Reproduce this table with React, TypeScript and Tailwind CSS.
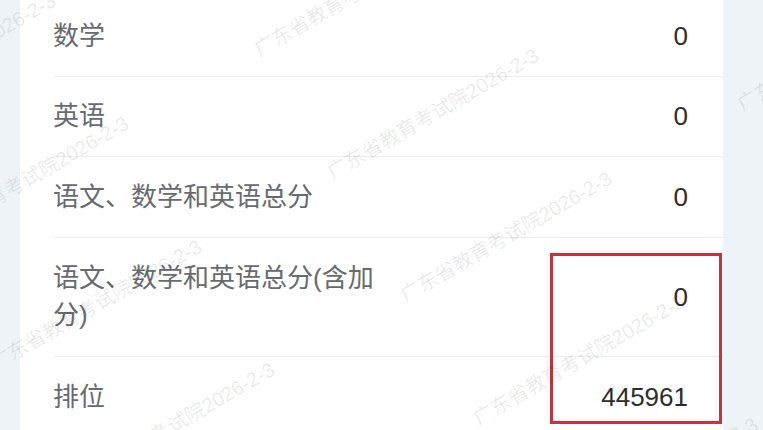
import type { ReactNode } from "react";

interface ScoreRow {
  label: ReactNode;
  value: string;
  height: string;
}

const rows: ScoreRow[] = [
  { label: "数学", value: "0", height: "h-[80px]" },
  { label: "英语", value: "0", height: "h-[80px]" },
  { label: "语文、数学和英语总分", value: "0", height: "h-[81px]" },
  { label: "语文、数学和英语总分(含加分)", value: "0", height: "h-[119px]" },
  { label: "排位", value: "445961", height: "h-[80px]" },
];

// watermark start points on a repeating diagonal lattice
function watermarkPoints() {
  const origin = { x: 335, y: 184 };
  const u = { x: 73, y: 123 };
  const v = { x: 410, y: -68 };
  const pts: { x: number; y: number }[] = [];
  for (let a = -4; a <= 4; a++) {
    for (let b = -2; b <= 2; b++) {
      const x = origin.x + a * u.x + b * v.x;
      const y = origin.y + a * u.y + b * v.y;
      if (x > -260 && x < 780 && y > -10 && y < 580) pts.push({ x, y });
    }
  }
  return pts;
}

export default function App() {
  const marks = watermarkPoints();

  return (
    <div
      className="relative w-[763px] h-[430px] overflow-hidden bg-[#eef3f8]"
      style={{ fontFamily: '"Liberation Sans", "Noto Sans CJK SC", sans-serif' }}
    >
      <div className="ml-[20px] -mt-[3px] w-[703px] bg-white">
        {rows.map((r, idx) => (
          <div key={idx} className={`${r.height} pl-[33px]`}>
            <div
              className={`flex h-full items-center justify-between pr-[35px] ${
                idx < rows.length - 1 ? "border-b border-[#ededed]" : ""
              }`}
            >
              <span className="max-w-[330px] text-[26px] leading-[37px] text-[#666a71]">
                {r.label}
              </span>
              <span className="text-[26px] leading-[37px] text-[#2c2c2c]">
                {r.value}
              </span>
            </div>
          </div>
        ))}
      </div>

      {/* highlight annotation */}
      <div className="absolute left-[550px] top-[253px] h-[171px] w-[172px] border-[3px] border-[#c8323a]" />

      {/* watermark */}
      <div className="pointer-events-none absolute inset-0">
        {marks.map((p, i) => (
          <span
            key={i}
            className="absolute origin-[0_100%] -rotate-[30deg] whitespace-nowrap text-[20px] leading-[24px] text-black/[0.09]"
            style={{ left: p.x, top: p.y - 24 }}
          >
            广东省教育考试院2026-2-3
          </span>
        ))}
      </div>
    </div>
  );
}
